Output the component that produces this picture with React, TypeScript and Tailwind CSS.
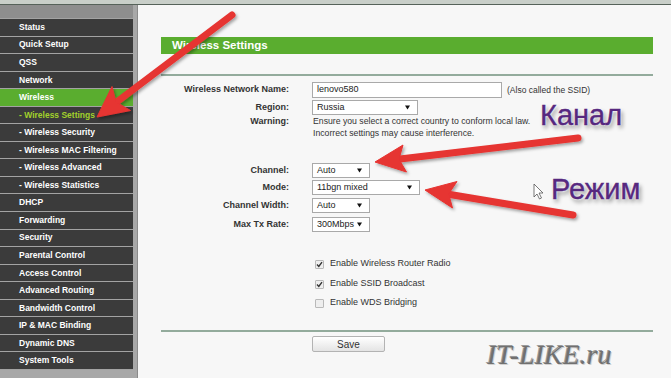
import React from "react";

type Item = { t: string; active?: boolean; cur?: boolean };

const items: Item[] = [
  { t: "Status" },
  { t: "Quick Setup" },
  { t: "QSS" },
  { t: "Network" },
  { t: "Wireless", active: true },
  { t: "- Wireless Settings", cur: true },
  { t: "- Wireless Security" },
  { t: "- Wireless MAC Filtering" },
  { t: "- Wireless Advanced" },
  { t: "- Wireless Statistics" },
  { t: "DHCP" },
  { t: "Forwarding" },
  { t: "Security" },
  { t: "Parental Control" },
  { t: "Access Control" },
  { t: "Advanced Routing" },
  { t: "Bandwidth Control" },
  { t: "IP & MAC Binding" },
  { t: "Dynamic DNS" },
  { t: "System Tools" },
];

function Tri() {
  return (
    <svg width="5" height="5" viewBox="0 0 5 5" className="shrink-0">
      <polygon points="0,0.5 5,0.5 2.5,4.5" fill="#111" />
    </svg>
  );
}

function Select({ value, w }: { value: string; w: string }) {
  return (
    <div
      className={`${w} h-[15px] border border-[#a9a9a9] bg-white flex items-center justify-between pl-[4px] pr-[7px] text-[9px] text-[#222]`}
    >
      <span>{value}</span>
      <Tri />
    </div>
  );
}

function Row({
  label,
  className,
  children,
}: {
  label: string;
  className: string;
  children: React.ReactNode;
}) {
  return (
    <div className={`flex ${className}`}>
      <div className="w-[128px] shrink-0 text-right text-[9px] text-[#333] font-bold">{label}</div>
      <div className="ml-[23px] flex items-center">{children}</div>
    </div>
  );
}

function Check({ checked, label, className }: { checked: boolean; label: string; className: string }) {
  return (
    <div className={`flex items-center h-[14px] pl-[151px] ${className}`}>
      <div className="ml-[3px] w-[9px] h-[9px] border border-[#b9b9b9] bg-[#eeeeee] rounded-[1px] flex items-center justify-center">
        {checked && (
          <svg width="7" height="7" viewBox="0 0 7 7">
            <path d="M1 3.6 L2.8 5.4 L6 1.2" stroke="#333" strokeWidth="1.4" fill="none" />
          </svg>
        )}
      </div>
      <span className="ml-[6px] text-[9px] text-[#333]">{label}</span>
    </div>
  );
}

export default function App() {
  return (
    <div className="relative w-[671px] h-[378px] overflow-hidden bg-[#f7f7f7] font-['Liberation_Sans',Arial,sans-serif]">
      <div className="h-[5px] bg-[#c9cfc9] border-b border-[#56625a]" />
      <div className="flex h-[373px]">
        {/* Sidebar */}
        <div className="w-[138px] shrink-0 flex flex-col bg-[#a8a8a8] border-r border-[#8a8a8a]">
          <div className="w-[133px] h-[13px] bg-[#8e8e8e]" />
          {items.map((it) => (
            <div
              key={it.t}
              className={`w-[133px] h-[17.55px] border-t border-[#a3a3a3] flex items-center pl-[19px] text-[8.5px] font-bold whitespace-nowrap ${
                it.active ? "bg-[#5aad2f] text-white" : "bg-[#3b3b3b]"
              } ${it.cur ? "text-[#a2d12c]" : it.active ? "" : "text-white"}`}
            >
              {it.t}
            </div>
          ))}
          <div className="w-[133px] border-t border-[#a3a3a3]" />
        </div>

        {/* Content */}
        <div className="flex-1 pl-[23px] pr-[18px] pt-[32px] flex flex-col">
          <div className="h-[17px] bg-[#5aad2f] flex items-center pl-[11px] text-white font-bold text-[11.5px]">
            Wireless Settings
          </div>
          <div className="mt-[20px] h-[2px] bg-[#93ab9c]" />

          <Row label="Wireless Network Name:" className="mt-[6px] h-[16px] items-center">
            <div className="w-[190px] h-[16px] border border-[#a9a9a9] bg-white flex items-center pl-[4px] text-[9px] text-[#222]">
              lenovo580
            </div>
            <span className="ml-[5px] text-[8.5px] text-[#333]">(Also called the SSID)</span>
          </Row>

          <Row label="Region:" className="mt-[2px] h-[15px] items-center">
            <Select value="Russia" w="w-[106px]" />
          </Row>

          <div className="flex leading-[12px]">
            <div className="w-[128px] shrink-0 text-right text-[9px] text-[#333] font-bold">Warning:</div>
            <div className="ml-[24px] text-[8.7px] text-[#333]">
              <div>Ensure you select a correct country to conform local law.</div>
              <div>Incorrect settings may cause interference.</div>
            </div>
          </div>

          <Row label="Channel:" className="mt-[24px] h-[15px] items-center">
            <Select value="Auto" w="w-[58px]" />
          </Row>
          <Row label="Mode:" className="mt-[2px] h-[15px] items-center">
            <Select value="11bgn mixed" w="w-[108px]" />
          </Row>
          <Row label="Channel Width:" className="mt-[3px] h-[15px] items-center">
            <Select value="Auto" w="w-[58px]" />
          </Row>
          <Row label="Max Tx Rate:" className="mt-[4px] h-[15px] items-center">
            <Select value="300Mbps" w="w-[58px]" />
          </Row>

          <Check checked label="Enable Wireless Router Radio" className="mt-[25px]" />
          <Check checked label="Enable SSID Broadcast" className="mt-[6px]" />
          <Check checked={false} label="Enable WDS Bridging" className="mt-[5px]" />

          <div className="mt-[20px] h-[2px] bg-[#93ab9c]" />
          <div className="mt-[4px] pl-[151px]">
            <div className="w-[73px] h-[16px] border border-[#b3b3b3] rounded-[2px] bg-gradient-to-b from-[#ffffff] to-[#e4e4e4] flex items-center justify-center text-[10px] text-[#333]">
              Save
            </div>
          </div>
        </div>
      </div>

      {/* Annotations overlay */}
      <svg
        className="absolute left-0 top-0 pointer-events-none"
        width="671"
        height="378"
        viewBox="0 0 671 378"
      >
        <defs>
          <filter id="sh" x="-20%" y="-20%" width="140%" height="140%">
            <feDropShadow dx="1.5" dy="2" stdDeviation="1.5" floodColor="#000" floodOpacity="0.35" />
          </filter>
        </defs>
        <g filter="url(#sh)" fill="#e63431" stroke="#e63431">
          <line x1="232" y1="15" x2="118" y2="101" strokeWidth="7" strokeLinecap="round" />
          <polygon points="97,117 130.5,110.5 116,102 112,86.5" strokeWidth="1" strokeLinejoin="round" />

          <line x1="578" y1="138" x2="400" y2="159" strokeWidth="7" strokeLinecap="round" />
          <polygon points="375,162 406.5,172 399,159.2 403,145" strokeWidth="1" strokeLinejoin="round" />

          <line x1="573" y1="215" x2="450" y2="194.5" strokeWidth="7" strokeLinecap="round" />
          <polygon points="425,190 452.5,208 448.7,193.9 457,181.5" strokeWidth="1" strokeLinejoin="round" />
        </g>
        {/* cursor */}
        <path
          d="M534 184 L534 197 L537 194 L539.5 199 L541.5 198 L539 193 L543 193 Z"
          fill="#fff"
          stroke="#555"
          strokeWidth="0.8"
          strokeLinejoin="round"
        />
      </svg>

      <div className="absolute left-[540px] top-[101px] text-[29px] leading-none text-[#56287f] font-['Liberation_Sans',Arial,sans-serif] [-webkit-text-stroke:0.4px_#56287f] [text-shadow:0_0_2px_#fff,0_0_2px_#fff,2px_3px_4px_rgba(0,0,0,0.45)]">
        Канал
      </div>
      <div className="absolute left-[551px] top-[175px] text-[29px] leading-none text-[#56287f] font-['Liberation_Sans',Arial,sans-serif] [-webkit-text-stroke:0.4px_#56287f] [text-shadow:0_0_2px_#fff,0_0_2px_#fff,2px_3px_4px_rgba(0,0,0,0.45)]">
        Режим
      </div>
      <div className="absolute left-[487px] top-[341px] text-[28px] leading-none italic text-[#707070] font-['Liberation_Serif','Times_New_Roman',serif] [text-shadow:1px_1px_0_#d0d0d0,-1px_-1px_0_#9a9a9a]">
        IT-LIKE.ru
      </div>
    </div>
  );
}
